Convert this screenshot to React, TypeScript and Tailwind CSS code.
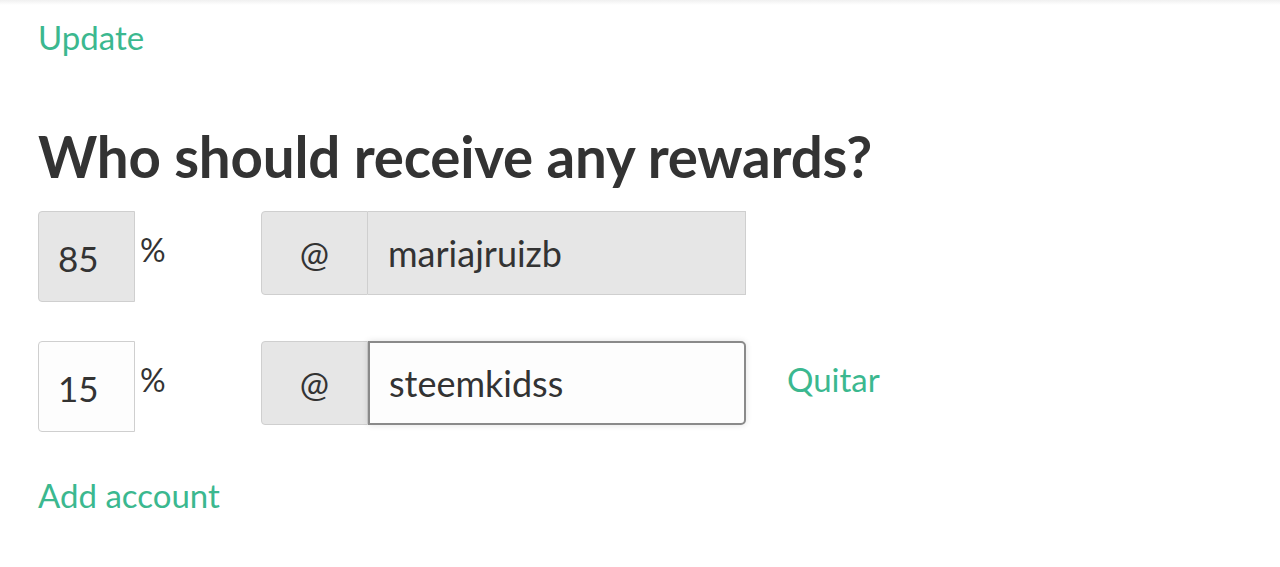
import { useState } from 'react';

type Beneficiary = {
  percent: string;
  account: string;
  locked: boolean;
};

const font = { fontFamily: '"Source Sans Pro", Lato, "Liberation Sans", sans-serif' };

export default function App() {
  const [rows] = useState<Beneficiary[]>([
    { percent: '85', account: 'mariajruizb', locked: true },
    { percent: '15', account: 'steemkidss', locked: false },
  ]);

  return (
    <div className="w-[1280px] h-[567px] bg-white text-[#333] overflow-hidden" style={font}>
      <div className="h-[5px] bg-gradient-to-b from-[#f0f0f0] to-white" />
      <div className="pl-[38px]">
        <a className="block text-[#3bb88f] text-[33px] leading-[40px] mt-[12px] w-fit">Update</a>

        <h2 className="mt-[64px] text-[56.5px] font-bold leading-[70px] tracking-[-0.2px]">
          Who should receive any rewards?
        </h2>

        <div className="mt-[20px] flex flex-col gap-[39px]">
          {rows.map((row, i) => (
            <div key={i} className="flex items-start">
              <div className="flex items-start w-[223px]">
                <div
                  className={
                    row.locked
                      ? 'w-[97px] h-[91px] flex items-center pl-[19px] pt-[4px] text-[35px] bg-[#e6e6e6] border border-[#cfcfcf] rounded-l-[4px]'
                      : 'w-[97px] h-[91px] flex items-center pl-[19px] pt-[4px] text-[35px] bg-[#fdfdfd] border border-[#cfcfcf] rounded-l-[4px]'
                  }
                >
                  {row.percent}
                </div>
                <span className="ml-[5px] mt-[22px] text-[32px] leading-[34px]">%</span>
              </div>
              <div className="flex h-[84px]">
                <div className="w-[107px] flex items-center justify-center text-[35px] bg-[#e6e6e6] border border-[#cfcfcf] rounded-l-[4px]">
                  @
                </div>
                {row.locked ? (
                  <div className="w-[378px] flex items-center pl-[20px] text-[36px] bg-[#e6e6e6] border border-l-0 border-[#cfcfcf]">
                    {row.account}
                  </div>
                ) : (
                  <div className="w-[378px] flex items-center pl-[19px] text-[36px] bg-[#fdfdfd] border-2 border-[#8a8a8a] rounded-r-[5px] shadow-[0_0_6px_rgba(0,0,0,0.12)]">
                    {row.account}
                  </div>
                )}
              </div>
              {!row.locked && (
                <a className="ml-[41px] mt-[18px] text-[#3bb88f] text-[33px] leading-[40px]">Quitar</a>
              )}
            </div>
          ))}
        </div>

        <a className="block mt-[43px] text-[#3bb88f] text-[33px] leading-[40px] w-fit">Add account</a>
      </div>
    </div>
  );
}
